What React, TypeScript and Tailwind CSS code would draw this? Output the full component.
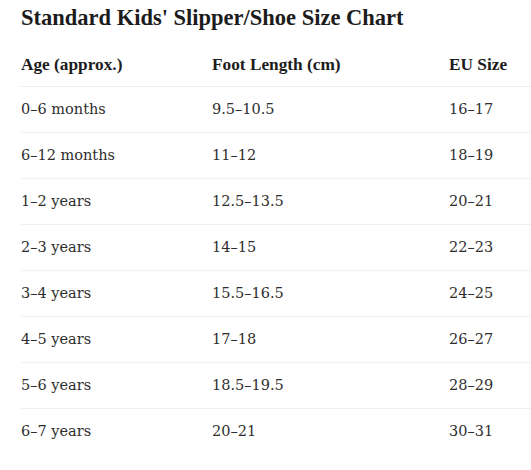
const rows = [
  ['0–6 months', '9.5–10.5', '16–17'],
  ['6–12 months', '11–12', '18–19'],
  ['1–2 years', '12.5–13.5', '20–21'],
  ['2–3 years', '14–15', '22–23'],
  ['3–4 years', '15.5–16.5', '24–25'],
  ['4–5 years', '17–18', '26–27'],
  ['5–6 years', '18.5–19.5', '28–29'],
  ['6–7 years', '20–21', '30–31'],
];

export default function App() {
  return (
    <div className="min-h-screen bg-white pl-[21px] pt-[3px] font-['DejaVu_Serif',serif] text-[#2e2e2e]">
      <h1 className="font-['Liberation_Serif',serif] text-[22.5px] leading-[30px] font-bold text-[#1c1c1c]">
        Standard Kids' Slipper/Shoe Size Chart
      </h1>

      <div className="mt-[11px]">
        {/* header */}
        <div className="grid grid-cols-[191px_237px_1fr] h-[43px] items-center border-b border-[#ececec] font-['Liberation_Serif',serif] text-[17.3px] font-bold text-[#1c1c1c]">
          <span>Age (approx.)</span>
          <span>Foot Length (cm)</span>
          <span>EU Size</span>
        </div>

        {rows.map((r, i) => (
          <div
            key={i}
            className={`grid grid-cols-[191px_237px_1fr] h-[46px] items-center text-[14.5px] ${
              i < rows.length - 1 ? 'border-b border-[#f1f1f1]' : ''
            }`}
          >
            <span>{r[0]}</span>
            <span>{r[1]}</span>
            <span>{r[2]}</span>
          </div>
        ))}
      </div>
    </div>
  );
}
